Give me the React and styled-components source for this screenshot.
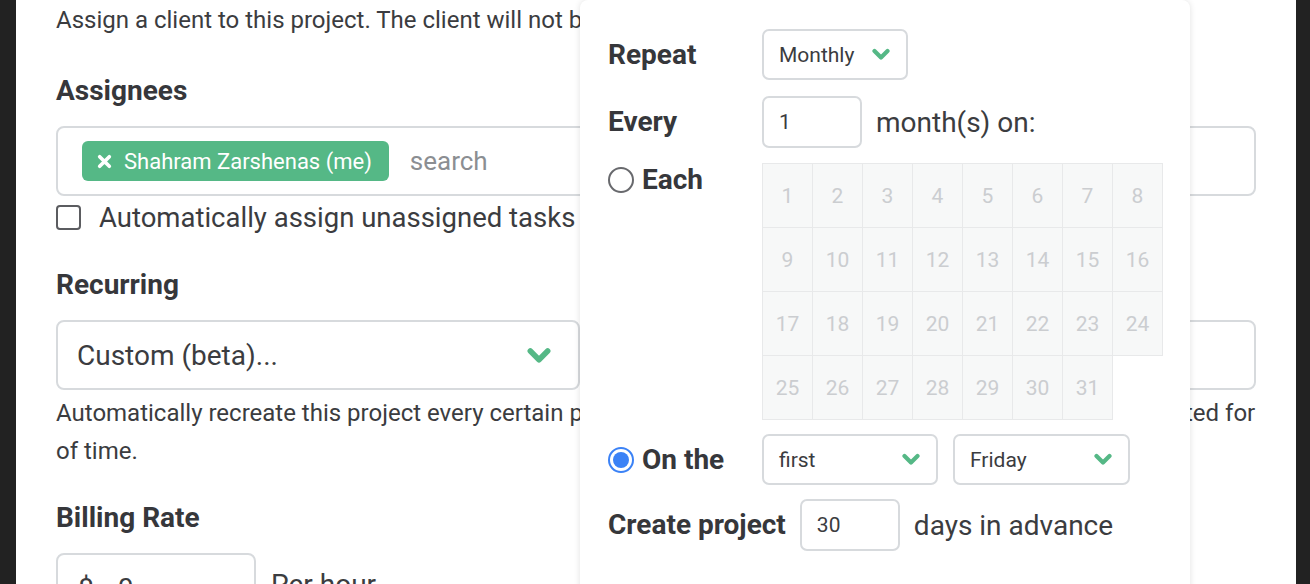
import React from "react";
import styled, { createGlobalStyle } from "styled-components";

const Global = createGlobalStyle`
  html, body { margin: 0; padding: 0; background: #222222; }
  body { font-family: Roboto, "Noto Sans", "Liberation Sans", sans-serif; color: #3b3c40; }
  * { box-sizing: border-box; }
`;

const Page = styled.div`
  display: flex;
  width: 1310px;
  height: 584px;
  overflow: hidden;
  background: #222222;
`;

const Side = styled.div`
  width: ${(p) => p.$w}px;
  flex-shrink: 0;
  background: #222222;
`;

const Main = styled.div`
  position: relative;
  flex: 1;
  background: #ffffff;
  padding: 1px 40px 0;
  display: flex;
  flex-direction: column;
  overflow: hidden;
`;

const Desc = styled.p`
  margin: ${(p) => p.$mt || 0}px 0 0;
  font-size: 24px;
  line-height: 38px;
  color: #3b3c40;
  white-space: nowrap;
`;

const Heading = styled.h3`
  margin: ${(p) => p.$mt}px 0 0;
  font-size: 28px;
  line-height: 30px;
  font-weight: 700;
  color: #36373b;
`;

const Box = styled.div`
  margin-top: 20px;
  height: ${(p) => p.$h || 70}px;
  width: ${(p) => (p.$w ? `${p.$w}px` : "100%")};
  border: 2px solid #d7dadd;
  border-radius: 8px;
  display: flex;
  align-items: center;
  background: #fff;
  flex-shrink: 0;
`;

const TagField = styled(Box)`
  padding: 0 24px;
  gap: 21px;
`;

const Tag = styled.span`
  display: inline-flex;
  align-items: center;
  gap: 12px;
  height: 40px;
  padding: 0 17px 0 15px;
  background: #55b886;
  color: #fff;
  border-radius: 6px;
  font-size: 22px;
`;

const Placeholder = styled.span`
  font-size: 26px;
  color: #8b8e92;
`;

const CheckRow = styled.label`
  margin-top: 6px;
  display: flex;
  align-items: center;
  gap: 18px;
  height: 30px;
  font-size: 27.5px;
  color: #3b3c40;
  white-space: nowrap;
`;

const CheckBox = styled.span`
  width: 25px;
  height: 25px;
  border: 2px solid #5b5c60;
  border-radius: 4px;
  flex-shrink: 0;
`;

const SelectRow = styled.div`
  display: flex;
  gap: 150px;
  margin-top: 20px;
`;

const BigSelect = styled.div`
  height: 70px;
  width: ${(p) => (p.$w ? `${p.$w}px` : "auto")};
  flex: ${(p) => (p.$w ? "none" : 1)};
  border: 2px solid #d7dadd;
  border-radius: 8px;
  display: flex;
  align-items: center;
  justify-content: space-between;
  padding: 0 27px 0 19px;
  font-size: 28px;
  color: #3b3c40;
`;

const RateRow = styled.div`
  display: flex;
  align-items: flex-start;
  gap: 15px;
`;

const RateBox = styled(Box)`
  padding: 0 20px;
  gap: 24px;
  font-size: 28px;
`;

const RateLabel = styled.span`
  margin-top: 35px;
  font-size: 28px;
`;

/* Popover */
const Popover = styled.div`
  position: absolute;
  left: 564px;
  top: 0;
  width: 610px;
  height: 600px;
  background: #fff;
  border-radius: 8px;
  box-shadow: 0 0 6px rgba(0, 0, 0, 0.12);
  padding: 29px 28px 0;
  display: flex;
  flex-direction: column;
  gap: 16px;
`;

const PRow = styled.div`
  display: flex;
  align-items: ${(p) => p.$align || "center"};
  margin-top: ${(p) => p.$mt || 0}px;
`;

const PLabel = styled.div`
  width: ${(p) => (p.$w ? `${p.$w}px` : "auto")};
  flex-shrink: 0;
  display: flex;
  align-items: center;
  gap: 8px;
  font-size: 28px;
  line-height: 32px;
  font-weight: 700;
  color: #36373b;
`;

const PText = styled.span`
  font-size: 28px;
  color: #3b3c40;
  margin-left: 14px;
`;

const SmallSelect = styled.div`
  width: ${(p) => p.$w}px;
  height: 51px;
  border: 2px solid #d7dadd;
  border-radius: 7px;
  display: flex;
  align-items: center;
  justify-content: space-between;
  padding: 0 16px 0 15px;
  font-size: 21px;
  color: #3b3c40;
  margin-left: ${(p) => p.$ml || 0}px;
`;

const SmallInput = styled.div`
  width: ${(p) => p.$w || 100}px;
  height: 52px;
  border: 2px solid #d7dadd;
  border-radius: 7px;
  display: flex;
  align-items: center;
  padding: 0 15px;
  font-size: 21px;
  color: #3b3c40;
  margin-left: ${(p) => p.$ml || 0}px;
`;

const Radio = styled.span`
  width: 26px;
  height: 26px;
  border-radius: 50%;
  border: 2px solid ${(p) => (p.$on ? "#3b82f6" : "#68696d")};
  display: flex;
  align-items: center;
  justify-content: center;
  flex-shrink: 0;
  &::after {
    content: "";
    display: ${(p) => (p.$on ? "block" : "none")};
    width: 16px;
    height: 16px;
    border-radius: 50%;
    background: #3b82f6;
  }
`;

const DayGrid = styled.div`
  display: grid;
  grid-template-columns: repeat(8, 50px);
  grid-auto-rows: 64px;
  margin-top: -1px;
`;

const Day = styled.div`
  background: #f7f8f8;
  border: 1px solid #e8e9ea;
  margin: 0 -1px -1px 0;
  display: flex;
  align-items: center;
  justify-content: center;
  font-size: 21px;
  color: #cbcdd0;
`;

const Chevron = ({ w = 18 }) => (
  <svg width={w} height={w * 0.7} viewBox="0 0 18 12.6" fill="none">
    <polyline
      points="2.5,3 9,9.5 15.5,3"
      stroke="#55b886"
      strokeWidth="4.2"
      strokeLinecap="round"
      strokeLinejoin="round"
    />
  </svg>
);

const XIcon = () => (
  <svg width="15" height="15" viewBox="0 0 14 14">
    <path d="M2.5 2.5 L11.5 11.5 M11.5 2.5 L2.5 11.5" stroke="#fff" strokeWidth="3.4" strokeLinecap="round" />
  </svg>
);

export default function App() {
  const days = Array.from({ length: 31 }, (_, i) => i + 1);
  return (
    <Page>
      <Global />
      <Side $w={16} />
      <Main>
        <Desc>Assign a client to this project. The client will not be able to see this project until you share it with them.</Desc>
        <Heading $mt={37}>Assignees</Heading>
        <TagField>
          <Tag>
            <XIcon />
            Shahram Zarshenas (me)
          </Tag>
          <Placeholder>search</Placeholder>
        </TagField>
        <CheckRow>
          <CheckBox />
          Automatically assign unassigned tasks to the project assignees
        </CheckRow>
        <Heading $mt={38}>Recurring</Heading>
        <SelectRow>
          <BigSelect $w={524}>
            Custom (beta)...
            <Chevron w={24} />
          </BigSelect>
          <BigSelect />
        </SelectRow>
        <Desc $mt={4}>
          Automatically recreate this project every certain period of time. A new copy of this project will then be created for
          <br />
          of time.
        </Desc>
        <Heading $mt={33}>Billing Rate</Heading>
        <RateRow>
          <RateBox $w={200}>
            <span>$</span>
            <span>0</span>
          </RateBox>
          <RateLabel>Per hour</RateLabel>
        </RateRow>

        <Popover>
          <PRow>
            <PLabel $w={154}>Repeat</PLabel>
            <SmallSelect $w={146}>
              Monthly
              <Chevron />
            </SmallSelect>
          </PRow>
          <PRow>
            <PLabel $w={154}>Every</PLabel>
            <SmallInput>1</SmallInput>
            <PText>month(s) on:</PText>
          </PRow>
          <PRow $align="flex-start">
            <PLabel $w={154}>
              <Radio />
              Each
            </PLabel>
            <DayGrid>
              {days.map((d) => (
                <Day key={d}>{d}</Day>
              ))}
            </DayGrid>
          </PRow>
          <PRow $mt={-1}>
            <PLabel $w={154}>
              <Radio $on />
              On the
            </PLabel>
            <SmallSelect $w={176}>
              first
              <Chevron />
            </SmallSelect>
            <SmallSelect $w={177} $ml={15}>
              Friday
              <Chevron />
            </SmallSelect>
          </PRow>
          <PRow $mt={-2}>
            <PLabel>Create project</PLabel>
            <SmallInput $ml={14}>30</SmallInput>
            <PText>days in advance</PText>
          </PRow>
        </Popover>
      </Main>
      <Side $w={14} />
    </Page>
  );
}
